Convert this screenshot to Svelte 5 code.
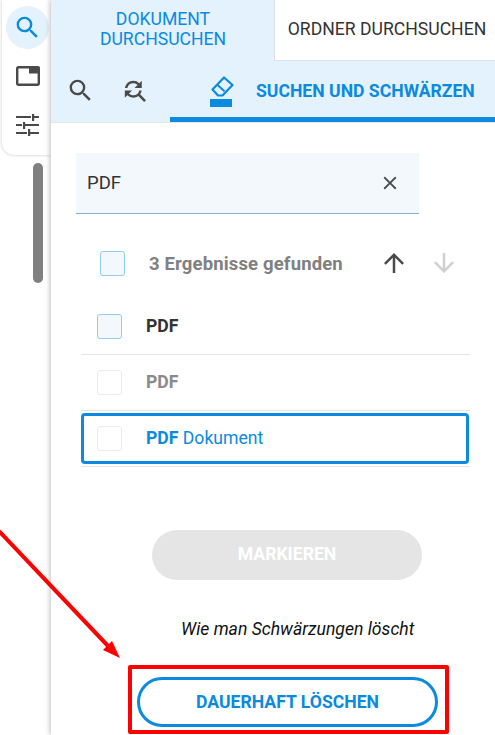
<script>
	const rows = [
		{ id: 1, match: 'PDF', rest: '', state: 'checked' },
		{ id: 2, match: 'PDF', rest: '', state: 'muted' },
		{ id: 3, match: 'PDF', rest: ' Dokument', state: 'active' }
	];
</script>

<div class="page">
	<aside class="side">
		<div class="rail">
			<button class="rail-btn selected" aria-label="Suchen">
				<svg viewBox="0 0 24 24" width="29" height="29"><path fill="#0b8ae0" d="M15.5 14h-.79l-.28-.27A6.47 6.47 0 0 0 16 9.5 6.5 6.5 0 1 0 9.5 16c1.61 0 3.09-.59 4.23-1.57l.27.28v.79l5 4.99L20.49 19l-4.99-5zm-6 0C7.01 14 5 11.99 5 9.5S7.01 5 9.5 5 14 7.01 14 9.5 11.99 14 9.5 14z"/></svg>
			</button>
			<button class="rail-btn" aria-label="Seiten">
				<svg viewBox="0 0 24 20" width="24" height="20">
					<rect x="1.2" y="1.2" width="21.6" height="17.6" rx="1.5" fill="none" stroke="#4a4a4a" stroke-width="2.4" />
					<rect x="13" y="0.5" width="10.5" height="7" fill="#4a4a4a" />
				</svg>
			</button>
			<button class="rail-btn sliders" aria-label="Einstellungen">
				<svg viewBox="0 0 23 22" width="23" height="22">
					<g fill="#4a4a4a">
						<rect x="0" y="2" width="15" height="2" />
						<rect x="16" y="0" width="2.2" height="7" />
						<rect x="18" y="2" width="5" height="2" />
						<rect x="0" y="10" width="6" height="2" />
						<rect x="7" y="8" width="2.2" height="7" />
						<rect x="9" y="10" width="14" height="2" />
						<rect x="0" y="18" width="11" height="2" />
						<rect x="12" y="15" width="2.2" height="7" />
						<rect x="14" y="18" width="9" height="2" />
					</g>
				</svg>
			</button>
		</div>
		<div class="scrollbar"></div>
	</aside>

	<main class="panel">
		<div class="tabs">
			<button class="tab current">DOKUMENT<br />DURCHSUCHEN</button>
			<button class="tab">ORDNER DURCHSUCHEN</button>
		</div>

		<div class="tools">
			<button class="tool" aria-label="Suchen">
				<svg viewBox="0 0 24 24" width="29" height="29"><path fill="#4a4a4a" d="M15.5 14h-.79l-.28-.27A6.47 6.47 0 0 0 16 9.5 6.5 6.5 0 1 0 9.5 16c1.61 0 3.09-.59 4.23-1.57l.27.28v.79l5 4.99L20.49 19l-4.99-5zm-6 0C7.01 14 5 11.99 5 9.5S7.01 5 9.5 5 14 7.01 14 9.5 11.99 14 9.5 14z"/></svg>
			</button>
			<button class="tool" aria-label="Ersetzen">
				<svg viewBox="0 0 24 24" width="29" height="29"><path fill="#4a4a4a" d="M11 6c1.38 0 2.63.56 3.54 1.46L12 10h6V4l-2.05 2.05A6.976 6.976 0 0 0 11 4c-3.53 0-6.43 2.61-6.92 6H6.1A5 5 0 0 1 11 6zm5.64 9.14A6.89 6.89 0 0 0 17.92 12H15.9a5 5 0 0 1-4.9 4c-1.38 0-2.63-.56-3.54-1.46L10 12H4v6l2.05-2.05A6.976 6.976 0 0 0 11 18c1.55 0 2.98-.51 4.14-1.36L20 21.49 21.49 20l-4.85-4.86z"/></svg>
			</button>
			<div class="redact">
				<svg viewBox="0 0 26 34" width="26" height="34">
					<path fill="none" stroke="#0b8ae0" stroke-width="2.2" stroke-linejoin="round" d="M15 3.5 23.5 11 13.5 21.5H9L3.5 15.5z" />
					<path fill="none" stroke="#0b8ae0" stroke-width="2" d="M8 10.5l7.5 6.8" />
					<rect x="1" y="25" width="22" height="8" fill="#0b8ae0" />
				</svg>
				<span>SUCHEN UND SCHWÄRZEN</span>
			</div>
		</div>

		<section class="body">
			<div class="search">
				<span class="query">PDF</span>
				<svg viewBox="0 0 24 24" width="22" height="22"><path fill="#4a4a4a" d="M19 6.41 17.59 5 12 10.59 6.41 5 5 6.41 10.59 12 5 17.59 6.41 19 12 13.41 17.59 19 19 17.59 13.41 12z"/></svg>
			</div>

			<div class="summary">
				<span class="box on"></span>
				<span class="count">3 Ergebnisse gefunden</span>
				<svg class="up" viewBox="0 0 24 24" width="30" height="30"><path fill="#4a4a4a" d="M4 12l1.41 1.41L11 7.83V20h2V7.83l5.58 5.59L20 12l-8-8-8 8z"/></svg>
				<svg class="down" viewBox="0 0 24 24" width="30" height="30"><path fill="#d0d0d0" d="M20 12l-1.41-1.41L13 16.17V4h-2v12.17l-5.58-5.59L4 12l8 8 8-8z"/></svg>
			</div>

			<ul class="results">
				{#each rows as row (row.id)}
					<li class="result {row.state}">
						<div class="result-inner">
							<span class="box" class:on={row.state === 'checked'}></span>
							<span class="label"><b>{row.match}</b>{row.rest}</span>
						</div>
					</li>
				{/each}
			</ul>

			<button class="mark">MARKIEREN</button>
			<p class="hint">Wie man Schwärzungen löscht</p>
			<button class="erase">DAUERHAFT LÖSCHEN</button>
		</section>
	</main>

	<!-- annotation drawn over the screenshot -->
	<svg class="arrow" width="130" height="140" viewBox="0 0 130 140">
		<line x1="-4" y1="-2" x2="109" y2="117" stroke="#ff0000" stroke-width="4" />
		<path fill="#ff0000" d="M120 128 103 120 112 111z" />
	</svg>
	<div class="callout"></div>
</div>

<style>
	:global(body) {
		margin: 0;
		background: #fff;
	}

	.page {
		position: relative;
		display: flex;
		width: 495px;
		height: 735px;
		overflow: hidden;
		font-family: Roboto, sans-serif;
		background: #fff;
	}

	button {
		border: none;
		padding: 0;
		background: none;
		font-family: inherit;
		cursor: pointer;
	}

	.side {
		flex: none;
		width: 51px;
		display: flex;
		flex-direction: column;
	}

	.rail {
		height: 155px;
		margin-left: 2px;
		box-sizing: border-box;
		padding: 6px 0 0 4px;
		border-radius: 0 0 0 12px;
		box-shadow: 0 0 3px rgba(0, 0, 0, 0.25);
		background: #fff;
		display: flex;
		flex-direction: column;
	}

	.rail-btn {
		width: 43px;
		height: 43px;
		flex: none;
		border-radius: 50%;
		display: flex;
		align-items: center;
		justify-content: center;
		margin-bottom: 5px;
	}

	.rail-btn:nth-child(2) {
		margin-bottom: 6px;
	}

	.rail-btn.sliders svg {
		margin-left: -1px;
	}

	.rail-btn.selected {
		background: #e3f2fd;
	}

	.scrollbar {
		width: 10px;
		height: 120px;
		margin: 8px 0 0 33px;
		border-radius: 5px;
		background: #808080;
	}

	.panel {
		flex: 1;
		min-width: 0;
		display: flex;
		flex-direction: column;
		box-shadow: -1px 0 5px rgba(0, 0, 0, 0.25);
		background: #fff;
		z-index: 1;
	}

	.tabs {
		display: flex;
		height: 61px;
		background: #e3f2fd;
	}

	.tab {
		font-size: 17.6px;
		line-height: 20px;
		text-align: center;
		color: #333;
	}

	.tab.current {
		width: 223px;
		color: #0b8ae0;
		padding-bottom: 4px;
		padding-left: 1px;
	}

	.tab:not(.current) {
		flex: 1;
		background: #fff;
		border-left: 1px solid #d5e0ea;
		border-bottom: 1px solid #dde3e8;
		white-space: nowrap;
		padding: 0 0 3px 4px;
	}

	.tools {
		height: 62px;
		box-sizing: border-box;
		display: flex;
		background: #e3f2fd;
		border-bottom: 1px solid #e5e5e5;
	}

	.tool {
		width: 29px;
		height: 29px;
		margin: 15px 0 0 15px;
		flex: none;
	}

	.tool + .tool {
		margin-left: 25px;
	}

	.redact {
		flex: 1;
		margin-left: 21px;
		display: flex;
		align-items: center;
		gap: 21px;
		padding: 4px 0 0 39px;
		border-bottom: 5px solid #0b8ae0;
		height: 61px;
		box-sizing: border-box;
	}

	.redact svg {
		flex: none;
	}

	.redact span {
		font-size: 17.6px;
		font-weight: 700;
		color: #0b8ae0;
		white-space: nowrap;
	}

	.body {
		flex: 1;
		display: flex;
		flex-direction: column;
		align-items: flex-start;
	}

	.search {
		width: 343px;
		height: 61px;
		box-sizing: border-box;
		margin: 30px 0 0 25px;
		padding: 0 18px 0 11px;
		display: flex;
		align-items: center;
		justify-content: space-between;
		background: #f3f8fd;
		border-bottom: 1px solid #7fb2d6;
	}

	.query {
		font-size: 18.5px;
		color: #333;
	}

	.summary {
		display: flex;
		align-items: center;
		height: 28px;
		margin: 35px 0 0 49px;
	}

	.count {
		font-size: 18.5px;
		font-weight: 700;
		letter-spacing: 0.15px;
		color: #808080;
		margin-left: 24px;
		padding-top: 1px;
		width: 230px;
		white-space: nowrap;
	}

	.down {
		margin-left: 20px;
	}

	.box {
		flex: none;
		width: 25px;
		height: 25px;
		box-sizing: border-box;
		border-radius: 3px;
		border: 1px solid #ececec;
		background: #fff;
	}

	.box.on {
		border-color: #90cdf6;
		background: #f3f8fd;
	}

	.results {
		list-style: none;
		margin: 22px 0 0 30px;
		padding: 0;
		width: 389px;
	}

	.result {
		height: 56px;
		box-sizing: border-box;
		border-bottom: 1px solid #e5e5e5;
	}

	.result.active {
		padding-top: 2px;
	}

	.result-inner {
		display: flex;
		align-items: center;
		height: 55px;
		box-sizing: border-box;
		padding-left: 16px;
		gap: 24px;
	}

	.result.active .result-inner {
		height: 51px;
		margin-right: 1px;
		padding-left: 13px;
		border: 3px solid #0b8ae0;
		border-radius: 4px;
	}

	.label {
		font-size: 17.6px;
		color: #333;
		padding-bottom: 2px;
	}

	.result.muted .label {
		color: #8a8a8a;
	}

	.result.active .label {
		color: #0b8ae0;
	}

	.mark {
		width: 270px;
		height: 50px;
		margin: 63px 0 0 101px;
		border-radius: 25px;
		background: #e5e5e5;
		color: #fff;
		font-size: 17.6px;
		font-weight: 700;
		padding-bottom: 3px;
	}

	.hint {
		margin: 39px 0 0 130px;
		font-size: 17.6px;
		line-height: 20px;
		font-style: italic;
		color: #111;
	}

	.erase {
		width: 301px;
		height: 50px;
		box-sizing: border-box;
		margin: 38px 0 0 86px;
		border: 3px solid #0b8ae0;
		border-radius: 25px;
		background: #fff;
		color: #0b8ae0;
		font-size: 17.6px;
		font-weight: 700;
	}

	.arrow {
		position: absolute;
		left: 0;
		top: 530px;
		z-index: 2;
		overflow: visible;
	}

	.callout {
		position: absolute;
		left: 128px;
		top: 665px;
		width: 321px;
		height: 69px;
		box-sizing: border-box;
		border: 4px solid #ff0000;
		border-radius: 2px;
		z-index: 2;
	}
</style>
